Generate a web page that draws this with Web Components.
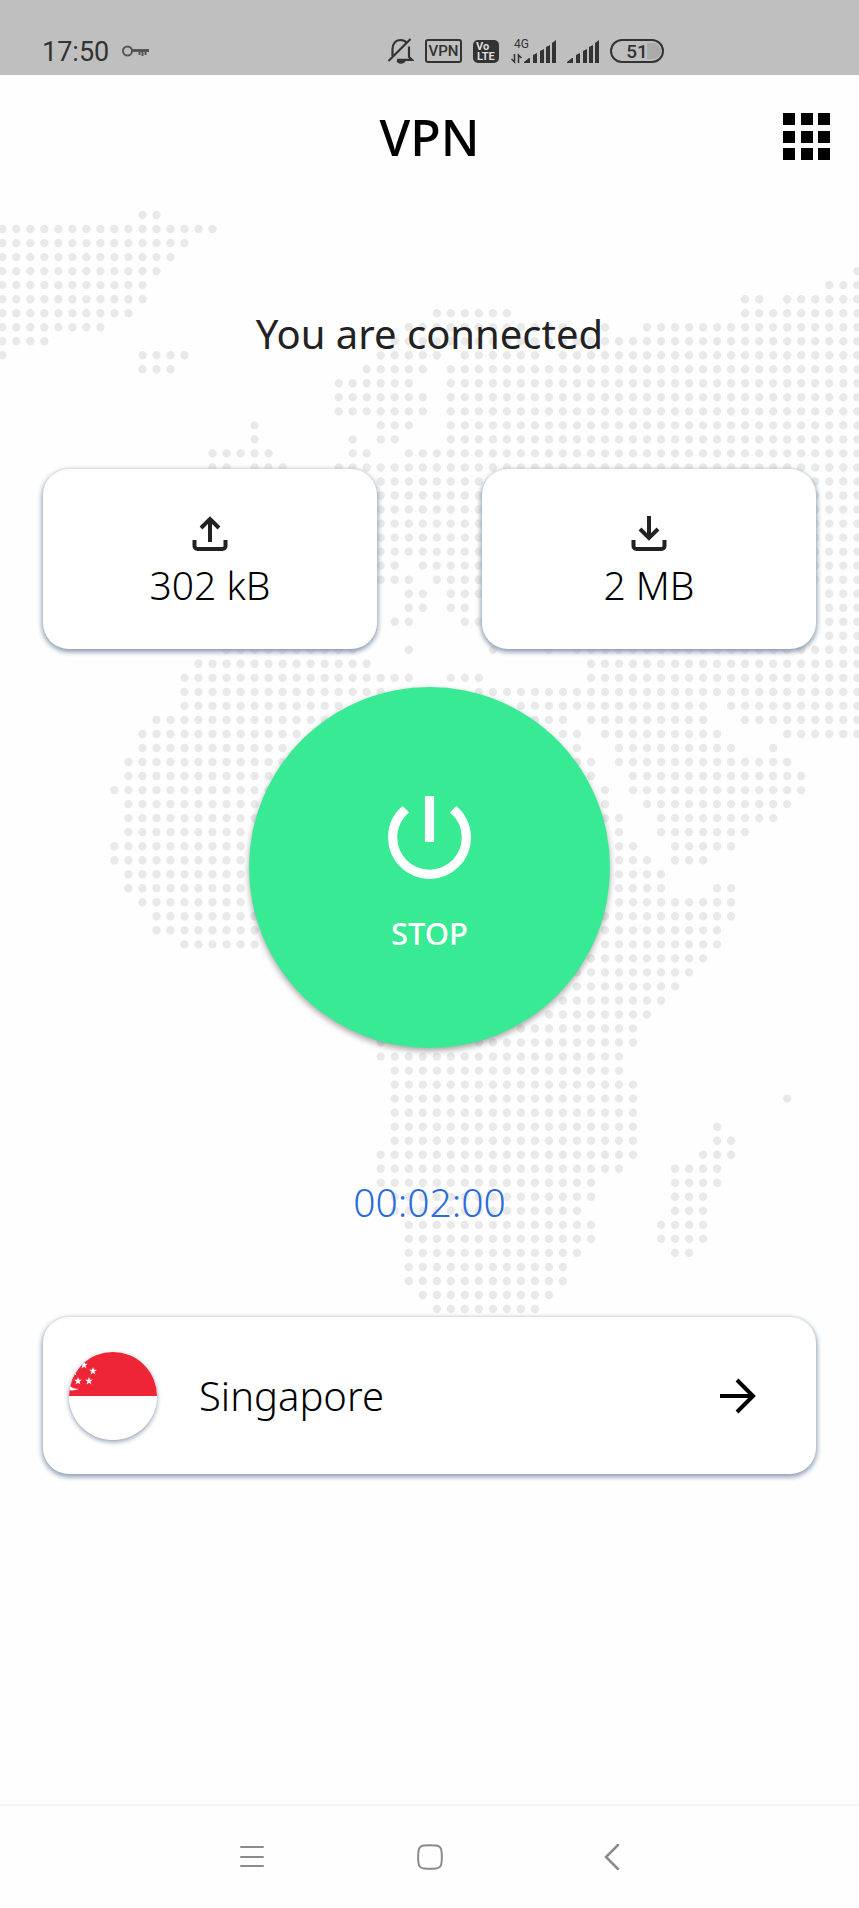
<!DOCTYPE html>
<html lang="en">
<head>
<meta charset="utf-8">
<meta name="viewport" content="width=device-width, initial-scale=1">
<title>VPN</title>
<style>
  html, body { margin: 0; }
  body { background: #fefefe; color: #000; font-family: "Noto Sans", "Open Sans", sans-serif; }
</style>
</head>
<body>
<vpn-screen></vpn-screen>

<script>
const define = (name, html, setup) => {
  const template = document.createElement('template');
  template.innerHTML = html;
  customElements.define(name, class extends HTMLElement {
    constructor() {
      super();
      this.attachShadow({ mode: 'open' }).append(template.content.cloneNode(true));
      if (setup) setup(this.shadowRoot);
    }
  });
};

/* Column ranges that are filled on each row of the dotted world map. */
const MAP_ROWS = [
  '10-11', '0-15', '0-13', '0-12', '0-11 61', '0-10 59-61', '0-10 53-54 56-61',
  '0-9 31-36 53-61', '0-7 29-40 43 46-61', '0-3 28-61', '0 10-13 27-31 33-38 40-61',
  '10-12 26-30 32-61', '24-29 32-61', '24-30 32-61', '24-30 32-61', '18 27-29 32-61',
  '18 25 27-28 32-61', '15-19 25-26 29-61', '15-16 18-20 24-61', '27-61', '27-61',
  '27-61', '27-61', '27-61', '27-61', '27-28 30-61', '27-29 31-61', '29-30 32-34 59-61',
  '29-30 32-33 59-61', '28-29 33-34 59-61', '59-61', '16-25 29 35 39 41-61',
  '14-26 42-61', '13-29 32-34 42-61', '13-27 34-61', '13-24 37-50 52-61',
  '11-23 37-40 42-50 53-61', '10-21 40-41 43-51 56-61', '10-20 41 44-52 55',
  '9-20 41-42 44-56', '9-19 42 45-57', '8-19 43 45-57', '9-18 43 46-56', '9-18 43-44 47-55',
  '9-17 44 47-53', '8-17 44-45 48-52', '8-17 44-46 48-50', '9-17 44-47', '9-17 44-47 51-52',
  '10-17 44-52', '11-18 43-52', '11-18 43-51', '13-18 43-51', '42-50', '41-49', '41-48',
  '40-47', '39-46', '37-45', '27 34-45', '27-44', '28-44', '28-45', '28-45 56', '28-45',
  '28-45 51', '28-45 51-52', '27-45 50-52', '27-44 48-51', '27-42 48-51', '28-42 48-50',
  '28-41 48-50', '29-42 47-50', '29-42 47-50', '29-41 48-49', '29-40', '29-40', '30-39', '31-38'
];

define('world-map', `
  <style>
    :host { display: block; }
    svg { display: block; width: 100%; height: auto; }
  </style>
  <svg viewBox="0 0 859 1120" aria-hidden="true"><path fill="none" stroke="#e9e9e9" stroke-width="8.4" stroke-linecap="round"/></svg>
`, root => {
  let d = '';
  MAP_ROWS.forEach((row, r) => row.split(' ').forEach(range => {
    const [from, to = from] = range.split('-').map(Number);
    for (let c = from; c <= to; c++) d += `M${(2.3 + c * 14.016).toFixed(1)} ${(16 + r * 14.026).toFixed(1)}h.01`;
  }));
  root.querySelector('path').setAttribute('d', d);
});

define('status-bar', `
  <style>
    :host { display: grid; grid-template-columns: 45% 1fr; height: 48px; padding-top: 27px; background: #bfbfbf;
            color: #333; font-family: Roboto, sans-serif; }
    div { display: flex; align-items: center; }
    .left { padding-left: 42px; gap: 13px; }
    .right { gap: 11px; }
    time { font-size: 27px; line-height: 32px; padding-top: 2px; }
    svg { display: block; flex: none; }
    text { font-family: Roboto, sans-serif; fill: #333; }
  </style>
  <div class="left">
    <time>17:50</time>
    <svg width="28" height="14" viewBox="0 0 28 14" fill="none" stroke="#555"><circle cx="5.500" cy="7" r="4.500" stroke-width="2"/><path stroke-width="3" d="M10 6.500h17"/><path stroke-width="2" d="M17.500 7v4M20.500 7v5M23.500 7v4"/></svg>
  </div>
  <div class="right">
    <svg width="27" height="28" viewBox="0 0 27 28" fill="none" stroke="#333" stroke-width="2.200"><path d="M5.500 19V12c0-5 3-9 8-9 3 0 5 1 6.500 3M22 9.500V20l3 2.800H10M1.500 24 23.500 2"/><path fill="#333" stroke="none" d="M9.500 24h9c-1 3.500-8 3.500-9 0z"/></svg>
    <svg width="37" height="24" viewBox="0 0 37 24"><rect x="1" y="1" width="35" height="22" rx="2" fill="none" stroke="#333" stroke-width="2"/><text x="18.500" y="17" text-anchor="middle" font-size="15" font-weight="500">VPN</text></svg>
    <svg width="27" height="24" viewBox="0 0 27 24"><rect y="1" width="26" height="23" rx="5" fill="#333"/><text x="3" y="11" font-size="11" font-weight="700" style="fill:#ddd">Vo</text><text x="4" y="21" font-size="11" font-weight="700" style="fill:#ddd">LTE</text></svg>
    <svg width="45" height="28" viewBox="0 0 45 28"><text x="3" y="11" font-size="12">4G</text><g fill="none" stroke="#333" stroke-width="1.500"><path d="M3.500 17v8L.5 22M7.500 26v-8l3 3"/></g><path fill="#333" d="M13 26v-1l5-4h1v5zM22 26v-8l4-2v10zM29 26V14l4-2v14zM35 26V10l4-2v18zM41 26V6l4-3v23z"/></svg>
    <svg width="32" height="28" viewBox="0 0 32 28"><path fill="#333" d="M0 26v-1l5-4h1v5zM9 26v-8l4-2v10zM16 26V14l4-2v14zM22 26V10l4-2v18zM28 26V6l4-3v23z"/></svg>
    <svg width="54" height="24" viewBox="0 0 54 24"><path fill="#aaa" d="M37 4h6a8 8 0 0 1 0 16h-6z"/><rect x="1" y="1" width="52" height="22" rx="11" fill="none" stroke="#333" stroke-width="2"/><text x="27" y="18.500" text-anchor="middle" font-size="19" font-weight="500">51</text></svg>
  </div>
`);

define('app-header', `
  <style>
    :host { display: grid; grid-template-columns: 1fr auto 1fr; align-items: center; height: 124px; padding: 0 28px; }
    h1 { grid-column: 2; margin: 0; font-size: 50px; line-height: 60px; font-weight: 500; }
    button { justify-self: end; border: 0; padding: 0; background: none; cursor: pointer; }
    svg { display: block; }
  </style>
  <h1><slot></slot></h1>
  <button type="button" aria-label="Apps"><svg width="48" height="48" viewBox="0 0 48 48"><path d="M0 0h12v12H0zM18 0h12v12H18zM35 0h12v12H35zM0 18h12v12H0zM18 18h12v12H18zM35 18h12v12H35zM0 35h12v12H0zM18 35h12v12H18zM35 35h12v12H35z"/></svg></button>
`);

define('traffic-card', `
  <style>
    :host { display: flex; flex-direction: column; align-items: center; gap: 11px; box-sizing: border-box; padding: 47px 12px 42px;
            border-radius: 26px; background: #fff; box-shadow: 0 2px 5px 1px #8b9cb0; }
    p { margin: 0; font-size: 39px; line-height: 44px; height: 44px; font-weight: 300; }
  </style>
  <slot name="icon"></slot>
  <p><slot></slot></p>
`);

define('power-button', `
  <style>
    :host { display: block; }
    button { display: flex; flex-direction: column; align-items: center; gap: 34px; box-sizing: border-box; width: 361px; height: 361px;
             padding: 109px 0 0; border: 0; border-radius: 50%; background: #38ea93; color: #fff; cursor: pointer;
             font: 500 31px/40px "Noto Sans", "Open Sans", sans-serif; box-shadow: 0 3px 6px rgba(0,0,0,.35); }
    svg { display: block; }
  </style>
  <button type="button">
    <svg width="83" height="83" viewBox="3 3 18 18" fill="#fff" aria-hidden="true"><path d="M13 3h-2v10h2zM17.830 5.170l-1.420 1.420A6.920 6.920 0 0 1 19 12a7 7 0 1 1-14 0c0-2.190 1.010-4.140 2.580-5.420L6.170 5.170A8.932 8.932 0 0 0 3 12a9 9 0 1 0 18 0c0-2.740-1.230-5.180-3.170-6.830z"/></svg>
    <slot></slot>
  </button>
`);

define('location-button', `
  <style>
    :host { display: block; }
    button { display: flex; align-items: center; width: 100%; height: 157px; padding: 0 60px 0 26px; border: 0; border-radius: 26px;
             background: #fff; color: #000; text-align: left; cursor: pointer; box-shadow: 0 2px 5px 1px #8b9cb0;
             font: 300 40px/48px "Noto Sans", "Open Sans", sans-serif; }
    svg { display: block; flex: none; }
    .flag { border-radius: 50%; box-shadow: 0 2px 5px #8b9cb0; }
    .name { flex: 1; padding-left: 42px; }
  </style>
  <button type="button">
    <svg class="flag" width="88" height="88" viewBox="0 0 88 88" aria-hidden="true">
      <defs><path id="star" d="M0-4 1-1.200 3.900-1.200 1.500.6 2.400 3.400 0 1.700-2.400 3.400-1.500.6-3.900-1.200-1-1.200z"/></defs>
      <path fill="#fff" d="M0 0h88v88H0z"/><path fill="#ee2536" d="M0 0h88v44H0z"/>
      <g fill="#fff"><use href="#star" x="15" y="13"/><use href="#star" x="24" y="19"/><use href="#star" x="5" y="20"/><use href="#star" x="9" y="29"/><use href="#star" x="20" y="29"/><path d="M0 33c3 3 6 4 10 4-3 1-7 2-10 1z"/></g>
    </svg>
    <span class="name"><slot></slot></span>
    <svg width="36" height="36" viewBox="0 0 36 36" fill="none" stroke="#000" stroke-width="4" aria-hidden="true"><path d="M0 18h33M17 2l16 16-16 16"/></svg>
  </button>
`);

define('nav-bar', `
  <style>
    :host { display: grid; grid-template-columns: 1fr auto 1fr; align-items: center; column-gap: 113px; height: 102px;
            border-top: 2px solid #f4f4f4; }
    button { border: 0; padding: 0 20px; background: none; cursor: pointer; }
    .recent { justify-self: end; }
    .back { justify-self: start; }
    svg { display: block; fill: none; stroke: #8b8b8b; stroke-width: 2; stroke-linecap: round; }
  </style>
  <button class="recent" type="button" aria-label="Recent apps"><svg width="24" height="26" viewBox="0 0 24 26"><path d="M1 3h22M1 13h22M1 22h22"/></svg></button>
  <button type="button" aria-label="Home"><svg width="26" height="26" viewBox="0 0 26 26"><path d="M7 1.500Q13 .8 19 1.500 24 2 24.500 7 25.200 13 24.500 19 24 24 19 24.500 13 25.200 7 24.500 2 24 1.500 19 .8 13 1.500 7 2 2 7 1.500z"/></svg></button>
  <button class="back" type="button" aria-label="Back"><svg width="32" height="26" viewBox="-8 0 32 26"><path stroke-width="2.500" d="M14 1 2 13l12 12"/></svg></button>
`);

define('vpn-screen', `
  <style>
    :host { display: flex; flex-direction: column; min-height: 100vh; }
    main { flex: 1; display: grid; align-items: start; }
    world-map, .content { grid-area: 1 / 1; min-width: 0; }
    .content { position: relative; display: flex; flex-direction: column; align-items: center; padding: 111px 43px 40px; }
    .state, .timer { margin: 0; line-height: 48px; }
    .state { font-size: 40px; color: #222; }
    .cards { display: grid; grid-template-columns: 1fr 1fr; gap: 105px; align-self: stretch; margin: 111px 0 38px; }
    .cards svg { display: block; fill: none; stroke: #222; stroke-width: 4; }
    .timer { margin: 130px 0 91px; font-size: 39px; font-weight: 300; color: #2b6bdc; }
    location-button { align-self: stretch; }
  </style>
  <status-bar></status-bar>
  <app-header>VPN</app-header>
  <main>
    <world-map></world-map>
    <div class="content">
      <p class="state">You are connected</p>
      <div class="cards">
        <traffic-card><svg slot="icon" width="36" height="36" viewBox="0 0 36 36" aria-label="Uploaded"><path d="M2.500 24v6a3 3 0 0 0 3 3h25a3 3 0 0 0 3-3v-6M18 26V4M9 12l9-9 9 9"/></svg>302 kB</traffic-card>
        <traffic-card><svg slot="icon" width="36" height="36" viewBox="0 0 36 36" aria-label="Downloaded"><path d="M2.500 24v6a3 3 0 0 0 3 3h25a3 3 0 0 0 3-3v-6M18 0v21M9 13l9 9 9-9"/></svg>2 MB</traffic-card>
      </div>
      <power-button>STOP</power-button>
      <p class="timer">00:02:00</p>
      <location-button>Singapore</location-button>
    </div>
  </main>
  <nav-bar></nav-bar>
`);
</script>
</body>
</html>
